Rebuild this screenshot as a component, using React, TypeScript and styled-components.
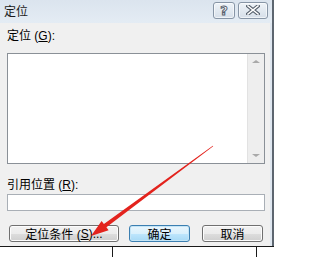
import React from "react";
import styled, { createGlobalStyle } from "styled-components";

const GlobalStyle = createGlobalStyle`
  body {
    margin: 0;
    background: #ffffff;
    font-family: "Liberation Sans", "Noto Sans CJK SC", sans-serif;
  }
`;

const Page = styled.div`
  position: relative;
  width: 274px;
  height: 257px;
  overflow: hidden;
  display: flex;
  flex-direction: column;
`;

const Dialog = styled.div`
  height: 246px;
  display: flex;
  flex-direction: column;
  background: #f0f0f0;
  border-right: 2px solid #5d6670;
  box-shadow: inset -2px 0 0 #dfe7f0;
  box-sizing: border-box;
`;

const TitleBar = styled.div`
  height: 23px;
  flex: none;
  display: flex;
  align-items: center;
  padding: 0 4px 0 4px;
  background: linear-gradient(#dbe4ee, #e4ecf4);
  box-sizing: border-box;
`;

const Title = styled.span`
  flex: 1;
  font-size: 12px;
  color: #1a1a1a;
  margin-top: -2px;
`;

const CaptionButton = styled.div<{ $w: number }>`
  width: ${(p) => p.$w}px;
  height: 17px;
  margin-left: 3px;
  margin-top: -3px;
  display: flex;
  align-items: center;
  justify-content: center;
  border: 1px solid #8795a6;
  border-radius: 3px;
  background: linear-gradient(#eef3f8, #d6dfe9);
  box-sizing: border-box;
  box-shadow: inset 0 0 0 1px rgba(255, 255, 255, 0.6);
`;

const HelpGlyph = styled.span`
  font-family: "DejaVu Sans", sans-serif;
  font-weight: bold;
  font-size: 13px;
  line-height: 1;
  color: #ffffff;
  -webkit-text-stroke: 1px #56606c;
`;

const Body = styled.div`
  flex: 1;
  display: flex;
  flex-direction: column;
  padding: 5px 3px 0 7px;
`;

const Label = styled.div<{ $top: number }>`
  height: 16px;
  margin-top: ${(p) => p.$top}px;
  font-size: 12px;
  line-height: 16px;
  color: #000000;
  u {
    text-decoration: underline;
  }
`;

const ListBox = styled.div`
  margin-top: 9px;
  height: 111px;
  width: 258px;
  display: flex;
  background: #ffffff;
  border: 1px solid #8a9097;
  box-sizing: border-box;
`;

const ListArea = styled.div`
  flex: 1;
`;

const ScrollBar = styled.div`
  width: 17px;
  display: flex;
  flex-direction: column;
  justify-content: space-between;
  align-items: center;
  background: #eeeeee;
  border-left: 1px solid #e2e2e2;
  padding: 6px 0 6px;
  box-sizing: border-box;
`;

const Arrow = styled.div<{ $down?: boolean }>`
  width: 0;
  height: 0;
  border-left: 4px solid transparent;
  border-right: 4px solid transparent;
  ${(p) =>
    p.$down
      ? "border-top: 3px solid #a9a9a9;"
      : "border-bottom: 3px solid #a9a9a9;"}
`;

const TextInput = styled.div`
  margin-top: 1px;
  height: 17px;
  width: 258px;
  background: #ffffff;
  border: 1px solid #a9afb6;
  box-sizing: border-box;
`;

const ButtonRow = styled.div`
  margin-top: 14px;
  display: flex;
  padding-left: 2px;
`;

const Button = styled.div<{ $w: number; $gap: number; $focus?: boolean }>`
  width: ${(p) => p.$w}px;
  height: 17px;
  margin-left: ${(p) => p.$gap}px;
  display: flex;
  align-items: center;
  justify-content: center;
  font-size: 12px;
  color: #000000;
  white-space: pre;
  border: 1px solid ${(p) => (p.$focus ? "#3c7fb1" : "#707070")};
  border-radius: 3px;
  background: ${(p) =>
    p.$focus
      ? "linear-gradient(#eaf6fd 0%, #d9f0fc 50%, #bee6fd 51%, #a7d9f5 100%)"
      : "linear-gradient(#f2f2f2 0%, #ebebeb 50%, #dddddd 51%, #cfcfcf 100%)"};
  box-shadow: inset 0 0 0 1px ${(p) => (p.$focus ? "#c4e5f6" : "#fcfcfc")};
  box-sizing: border-box;
  u {
    text-decoration: underline;
  }
`;

const Sheet = styled.div`
  flex: 1;
  display: flex;
  border-top: 1px solid #1a1a1a;
`;

const SheetCell = styled.div<{ $w: number }>`
  width: ${(p) => p.$w}px;
  border-right: 1px solid #1a1a1a;
`;

const Overlay = styled.svg`
  position: absolute;
  left: 0;
  top: 0;
  pointer-events: none;
`;

const CloseIcon = () => (
  <svg width="14" height="10" viewBox="0 0 14 10">
    <path d="M2 1 L12 9 M12 1 L2 9" stroke="#56606c" strokeWidth="3.6" strokeLinecap="square" />
    <path d="M2 1 L12 9 M12 1 L2 9" stroke="#ffffff" strokeWidth="1.6" strokeLinecap="square" />
  </svg>
);

export default function App() {
  return (
    <Page>
      <GlobalStyle />
      <Dialog>
        <TitleBar>
          <Title>定位</Title>
          <CaptionButton $w={22}>
            <HelpGlyph>?</HelpGlyph>
          </CaptionButton>
          <CaptionButton $w={30}>
            <CloseIcon />
          </CaptionButton>
        </TitleBar>
        <Body>
          <Label $top={0}>
            定位 (<u>G</u>):
          </Label>
          <ListBox>
            <ListArea />
            <ScrollBar>
              <Arrow />
              <Arrow $down />
            </ScrollBar>
          </ListBox>
          <Label $top={13}>
            引用位置 (<u>R</u>):
          </Label>
          <TextInput />
          <ButtonRow>
            <Button $w={110} $gap={0}>
              定位条件 (<u>S</u>)...
            </Button>
            <Button $w={61} $gap={10} $focus>
              确定
            </Button>
            <Button $w={61} $gap={12}>
              取消
            </Button>
          </ButtonRow>
        </Body>
      </Dialog>
      <Sheet>
        <SheetCell $w={112} />
        <SheetCell $w={143} />
      </Sheet>
      <Overlay width="274" height="257" viewBox="0 0 274 257">
        <polygon
          points="212.8,145.8 213.2,146.2 106.4,227.3 108.6,230.3 91,236 101.6,220.9 103.9,223.9"
          fill="#e3231d"
        />
      </Overlay>
    </Page>
  );
}
